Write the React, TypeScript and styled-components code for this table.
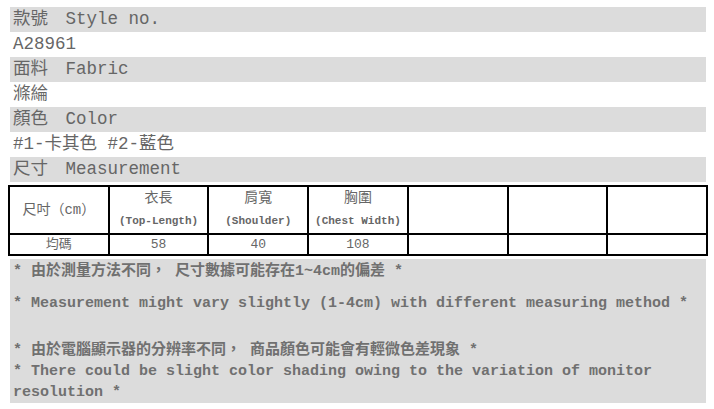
import styled, { createGlobalStyle } from 'styled-components';

const GlobalStyle = createGlobalStyle`
  body {
    margin: 0;
    background: #fff;
  }
`;

const mono = `"Liberation Mono", "Noto Sans CJK TC", monospace`;

const Page = styled.div`
  padding: 7px 6px 0 8px;
  font-family: ${mono};
  color: #666;
`;

const InfoRow = styled.div<{ $shaded?: boolean }>`
  margin: 0 2px;
  height: 25px;
  line-height: 25px;
  padding-left: 3px;
  font-size: 17.5px;
  white-space: nowrap;
  background: ${(p) => (p.$shaded ? '#dcdcdc' : 'transparent')};
`;

const SizeTable = styled.table`
  margin-top: 3px;
  width: 700px;
  border-collapse: collapse;
  table-layout: fixed;
  font-family: ${mono};
  color: #666;
  text-align: center;
`;

const HeadCell = styled.td`
  border: 2px solid #000;
  padding: 0;
  height: 46px;
  vertical-align: middle;
`;

const DataCell = styled.td`
  border: 2px solid #000;
  padding: 0;
  height: 19px;
  line-height: 19px;
  font-size: 13px;
`;

const MainLabel = styled.div`
  font-size: 14px;
  line-height: 23px;
  white-space: nowrap;
`;

const SubLabel = styled.div`
  font-size: 11px;
  font-weight: bold;
  line-height: 23px;
  white-space: nowrap;
`;

const Notes = styled.div`
  margin: 3px 2px 0;
  padding: 2px 3px 0;
  background: #dcdcdc;
  color: #707070;
  font-size: 15px;
  font-weight: bold;
  line-height: 21px;
`;

const Note = styled.p<{ $gap?: number }>`
  margin: ${(p) => p.$gap ?? 0}px 0 0;
`;

const columns = [
  { zh: '衣長', en: '(Top-Length)', value: '58' },
  { zh: '肩寬', en: '(Shoulder)', value: '40' },
  { zh: '胸圍', en: '(Chest Width)', value: '108' },
];

export default function App() {
  return (
    <>
      <GlobalStyle />
      <Page>
        <InfoRow $shaded>款號　Style no.</InfoRow>
        <InfoRow>A28961</InfoRow>
        <InfoRow $shaded>面料　Fabric</InfoRow>
        <InfoRow>滌綸</InfoRow>
        <InfoRow $shaded>顏色　Color</InfoRow>
        <InfoRow>#1-卡其色 #2-藍色</InfoRow>
        <InfoRow $shaded>尺寸　Measurement</InfoRow>

        <SizeTable>
          <tbody>
            <tr>
              <HeadCell>
                <MainLabel>尺吋（cm）</MainLabel>
              </HeadCell>
              {columns.map((c) => (
                <HeadCell key={c.zh}>
                  <MainLabel>{c.zh}</MainLabel>
                  <SubLabel>{c.en}</SubLabel>
                </HeadCell>
              ))}
              <HeadCell />
              <HeadCell />
              <HeadCell />
            </tr>
            <tr>
              <DataCell>均碼</DataCell>
              {columns.map((c) => (
                <DataCell key={c.zh}>{c.value}</DataCell>
              ))}
              <DataCell />
              <DataCell />
              <DataCell />
            </tr>
          </tbody>
        </SizeTable>

        <Notes>
          <Note>* 由於測量方法不同， 尺寸數據可能存在1~4cm的偏差 *</Note>
          <Note $gap={11}>* Measurement might vary slightly (1-4cm) with different measuring method *</Note>
          <Note $gap={26}>* 由於電腦顯示器的分辨率不同， 商品顏色可能會有輕微色差現象 *</Note>
          <Note>* There could be slight color shading owing to the variation of monitor resolution *</Note>
        </Notes>
      </Page>
    </>
  );
}
